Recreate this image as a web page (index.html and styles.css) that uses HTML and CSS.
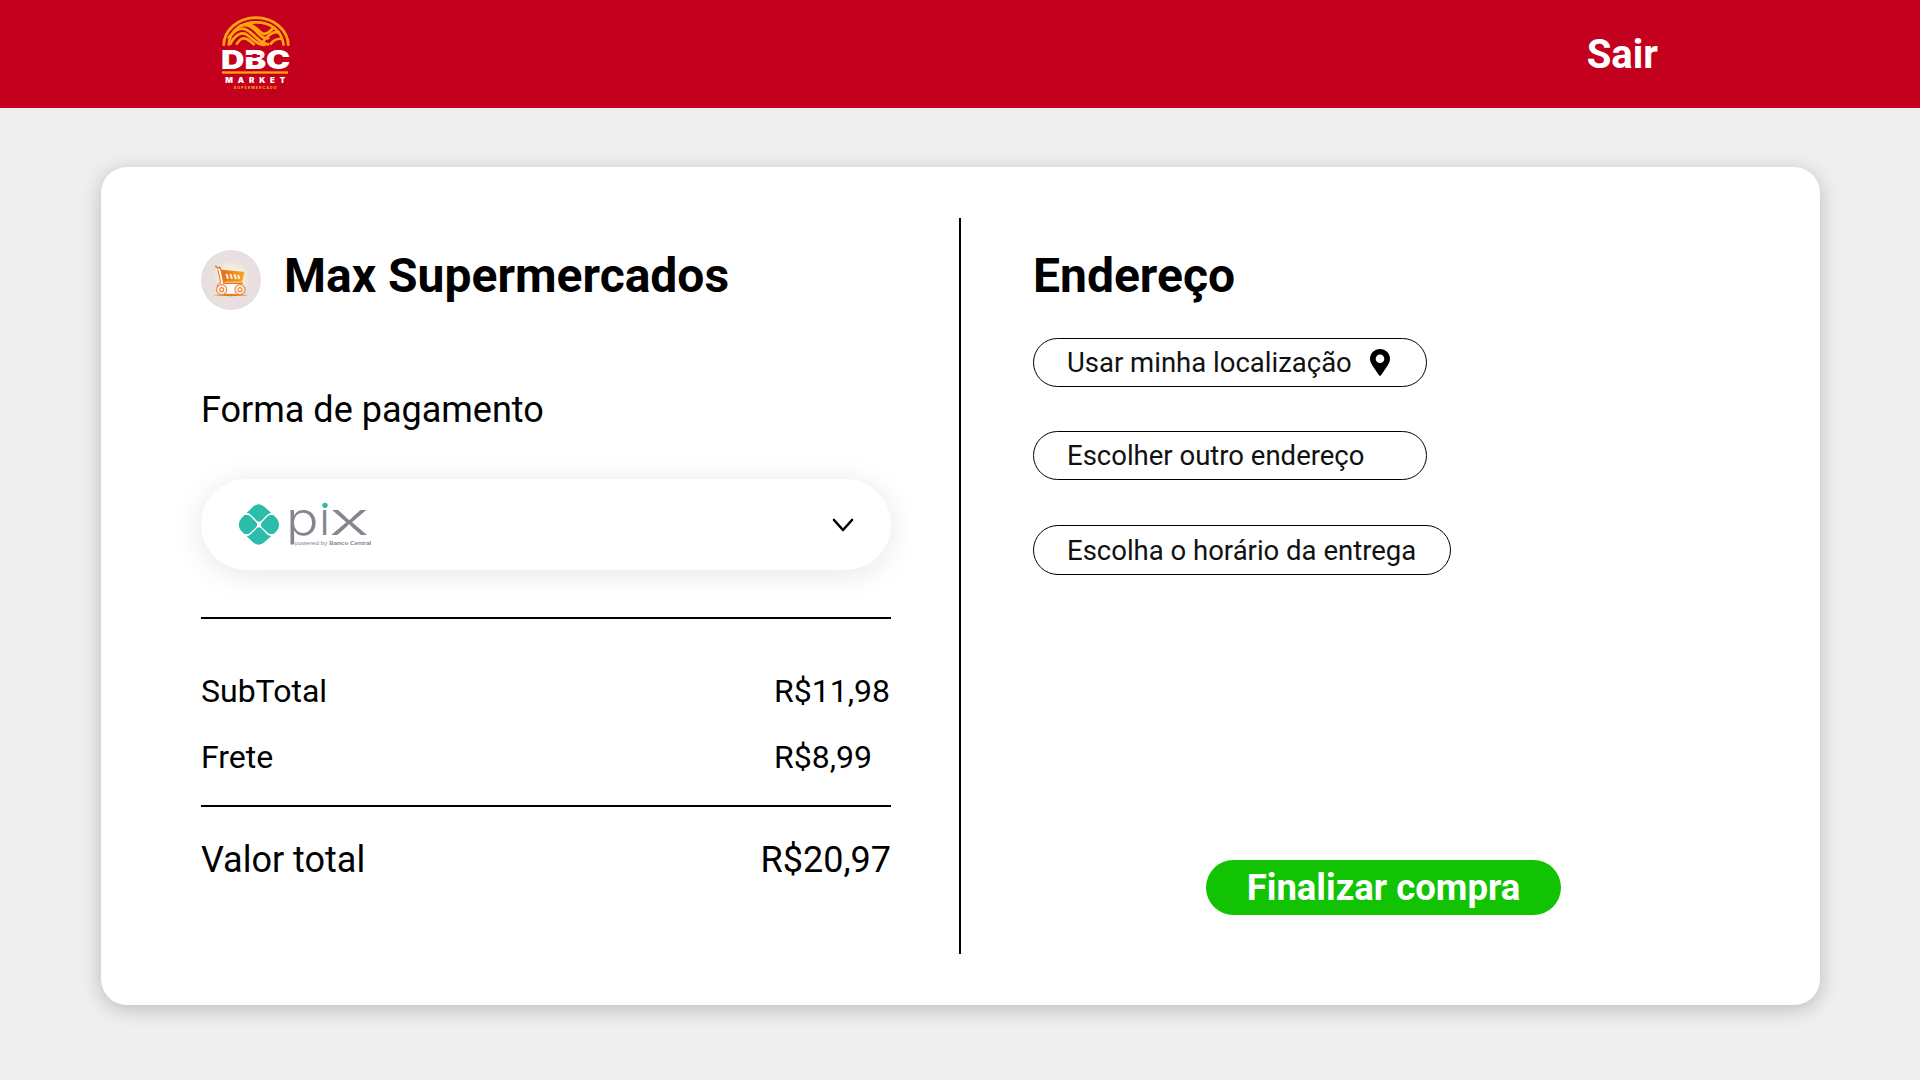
FILE: index.html
```
<!DOCTYPE html>
<html lang="pt-BR">
<head>
<meta charset="utf-8">
<title>DBC Market</title>
<link rel="stylesheet" href="styles.css">
</head>
<body>
<header class="topbar">
  <svg class="logo" viewBox="0 0 270 285" aria-label="DBC Market">
    <g fill="none" stroke="#fda40f" stroke-width="8">
      <path d="M41 122A97 84 0 0 1 235 122"/>
      <path d="M56 122C58 72 98 52 138 52C180 52 216 74 221 122"/>
      <path d="M54 100C80 68 99 64 119 80C141 100 158 118 177 119"/>
      <path d="M60 119C74 88 97 78 113 91C135 109 151 123 166 119"/>
      <path d="M79 119C92 97 104 96 118 107L134 120"/>
      <path d="M87 64C105 57 121 60 136 76C154 96 166 105 178 98"/>
      <path d="M110 54C128 59 137 67 150 80C163 94 176 83 190 69"/>
      <path d="M154 119C169 92 192 75 209 84"/>
      <path d="M180 119C190 106 199 99 217 102"/>
    </g>
    <text class="logo-name" x="33" y="191" textLength="208" lengthAdjust="spacingAndGlyphs">DBC</text>
    <path d="M108 153H150" stroke="#c3001d" stroke-width="6"/>
    <rect x="36" y="199" width="198" height="7" fill="#fda40f"/>
    <text class="logo-market" x="46" y="235" textLength="180">MARKET</text>
    <text class="logo-super" x="71" y="252" textLength="129">SUPERMERCADO</text>
  </svg>
  <a class="logout">Sair</a>
</header>

<main class="card">
  <section class="summary">
    <div class="store">
      <svg class="store-icon" viewBox="0 0 180 180">
        <defs>
          <radialGradient id="glow"><stop offset=".35" stop-color="#fff3dc"/><stop offset="1" stop-color="#e8e0df"/></radialGradient>
          <linearGradient id="basket"><stop offset="0" stop-color="#e66d17"/><stop offset="1" stop-color="#f7a520"/></linearGradient>
        </defs>
        <circle cx="90" cy="90" r="90" fill="#e8e0df"/>
        <ellipse cx="92" cy="83" rx="56" ry="54" fill="url(#glow)"/>
        <path d="M62 62L127 68L121 92H68Z" fill="url(#basket)" stroke="url(#basket)" stroke-width="6" stroke-linejoin="round"/>
        <path d="M77 74L80 84M89 74L92 84M101 75L104 85M112 77L114 85" stroke="#fff3df" stroke-width="6" stroke-linecap="round"/>
        <path d="M50 102H122V130H50Z" fill="#fffaf6"/>
        <path d="M44 49L50 54L56 52L61 62L69 100H124" fill="none" stroke="#e77a1c" stroke-width="4.500" stroke-linecap="round"/>
        <path d="M51 60L59 98Q48 102 48 110" fill="none" stroke="#e77a1c" stroke-width="3"/>
        <path d="M55 58L64 98" stroke="#fff" stroke-width="4"/>
        <path d="M37 136Q90 128 143 136Q90 141 37 136Z" fill="#e7791b"/>
        <g fill="#fff6ee" stroke="#e7883b" stroke-width="3.500">
          <circle cx="62" cy="119" r="15"/><circle cx="117" cy="119" r="15"/>
          <circle cx="62" cy="119" r="6"/><circle cx="117" cy="119" r="6"/>
        </g>
      </svg>
      <h1 class="title">Max Supermercados</h1>
    </div>
    <h2 class="subtitle">Forma de pagamento</h2>
    <div class="select">
      <svg class="pix" viewBox="144 95 405 144" aria-label="Pix">
        <g fill="#2bbcab">
          <path d="M170 128L188 110Q206 94 224 110L244 128Q236 129 230 135L214 151Q207 157 200 151L184 135Q178 128 170 128Z"/>
          <path d="M170 198L188 215Q206 231 224 215L244 197Q236 197 230 191L214 174Q207 168 200 174L184 190Q178 197 170 198Z"/>
          <path d="M163 134H172Q177 134 181 138L197 154Q206 163 197 172L181 187Q177 191 172 191H163L153 181Q140 163 153 145Z"/>
          <path d="M250 134H242Q237 134 233 138L217 154Q208 163 217 172L233 187Q237 191 242 191H250L261 181Q273 163 261 145Z"/>
        </g>
        <text class="pix-name" y="194"><tspan x="288" textLength="98" lengthAdjust="spacingAndGlyphs">p</tspan><tspan x="388">i</tspan><tspan x="417" textLength="121" lengthAdjust="spacingAndGlyphs">x</tspan></text>
        <path d="M393 87H418V114H393Z" fill="#fff"/>
        <circle cx="405" cy="105" r="8" fill="#2bbcab"/>
        <text class="pix-note" x="315" y="223" textLength="97" lengthAdjust="spacingAndGlyphs">powered by</text>
        <text class="pix-note pix-bank" x="418" y="223" textLength="126" lengthAdjust="spacingAndGlyphs">Banco Central</text>
      </svg>
      <svg class="chevron" viewBox="0 0 22 16"><path d="M2 2L11 12L20 2" fill="none" stroke="#000" stroke-width="2.600" stroke-linecap="round" stroke-linejoin="round"/></svg>
    </div>
    <dl class="costs">
      <div class="row"><dt>SubTotal</dt><dd>R$11,98</dd></div>
      <div class="row"><dt>Frete</dt><dd>R$8,99</dd></div>
    </dl>
    <div class="total"><span>Valor total</span><span>R$20,97</span></div>
  </section>
  <div class="divider"></div>
  <section class="delivery">
    <h2 class="title">Endereço</h2>
    <div class="options">
      <button class="option">Usar minha localização
        <svg class="pin" viewBox="0 0 20 27"><path fill-rule="evenodd" d="M10 0C4.400 0 0 4.300 0 9.700C0 14 3 17.500 9 26.200Q10 27.200 11 26.200C17 17.500 20 14 20 9.700C20 4.300 15.600 0 10 0ZM10 5.500A4.300 4.300 0 1 1 10 14.100A4.300 4.300 0 1 1 10 5.500Z"/></svg>
      </button>
      <button class="option">Escolher outro endereço</button>
      <button class="option option-time">Escolha o horário da entrega</button>
    </div>
    <button class="submit">Finalizar compra</button>
  </section>
</main>
</body>
</html>
```
FILE: styles.css
```
* { box-sizing: border-box; margin: 0; padding: 0; }
body { height: 1080px; background: #efefef; color: #000; font-family: Roboto, sans-serif; overflow: hidden; }
button { font-family: inherit; }

.topbar { height: 108px; padding: 5px 262px 0 210px; display: flex; justify-content: space-between; align-items: flex-start; background: #c3001d; }
.logo { width: 90px; height: 95px; }
.logo-name { font: 900 76px Inter, sans-serif; fill: #fff; }
.logo-market { font: 900 24px Inter, sans-serif; fill: #fff; }
.logo-super { font: 800 11px Inter, sans-serif; fill: #fda40f; }
.logout { margin-top: 26px; color: #fff; font-size: 40px; font-weight: 700; line-height: 48px; }

.card { display: flex; width: 1719px; height: 838px; margin: 59px 0 0 101px; padding: 51px 100px; background: #fff; border-radius: 26px; box-shadow: 0 4px 20px rgba(0, 0, 0, .22); }
.summary { width: 690px; }
.store { display: flex; gap: 23px; height: 60px; margin-top: 32px; }
.store-icon { width: 60px; height: 60px; }
.title { font-size: 48px; font-weight: 700; line-height: 56px; }
.store .title { margin-top: -2px; }
.subtitle { margin-top: 79px; font-size: 36px; font-weight: 400; line-height: 42px; }
.select { display: flex; justify-content: space-between; align-items: center; height: 91px; margin-top: 48px; padding: 2px 37px 0; border-radius: 46px; background: #fff; box-shadow: 0 4px 30px rgba(0, 0, 0, .1); }
.pix { width: 135px; height: 48px; overflow: visible; }
.pix-name { font: 300 137px Inter, sans-serif; fill: #83868f; }
.pix-note { font: 400 17px "Liberation Sans", sans-serif; fill: #83868f; }
.pix-bank { font-weight: 700; }
.chevron { width: 22px; height: 16px; }
.costs { height: 190px; margin-top: 47px; padding-top: 53px; border-top: 2px solid #000; border-bottom: 2px solid #000; }
.row { display: flex; justify-content: space-between; margin-bottom: 28px; font-size: 32px; line-height: 38px; }
.row dd { width: 117px; }
.total { display: flex; justify-content: space-between; margin-top: 32px; font-size: 36px; line-height: 42px; }

.divider { width: 2px; height: 736px; margin-left: 68px; background: #000; }
.delivery { width: 687px; margin-left: 72px; padding-top: 30px; display: flex; flex-direction: column; align-items: flex-start; }
.options { display: flex; flex-direction: column; align-items: flex-start; gap: 44px; margin-top: 34px; }
.option { display: flex; align-items: center; width: 394px; height: 49px; padding: 0 33px; border: 1px solid #000; border-radius: 25px; background: #fff; color: #111; font-size: 27.500px; white-space: nowrap; }
.option-time { width: 418px; height: 50px; margin-top: 1px; }
.pin { width: 20px; height: 27px; margin-left: 18px; fill: #000; }
.submit { width: 355px; height: 55px; margin: auto 0 39px 173px; border: 0; border-radius: 28px; background: #12c304; color: #fff; font-size: 36.500px; font-weight: 700; }
```
